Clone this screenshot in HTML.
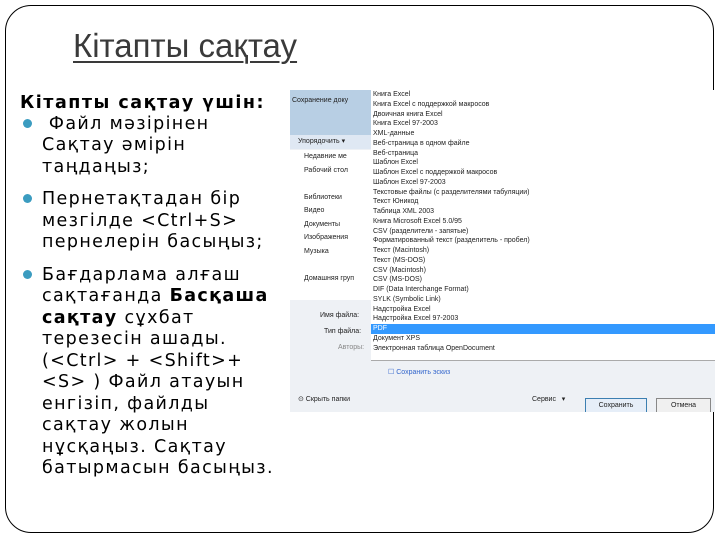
<!DOCTYPE html>
<html><head><meta charset="utf-8"><style>
body{margin:0;width:720px;height:540px;background:#fff;position:relative;overflow:hidden;font-family:"DejaVu Sans",sans-serif}
.frame{position:absolute;left:5px;top:5px;width:707px;height:526px;border:1.5px solid #000;border-radius:26px}
.title{position:absolute;left:73px;top:27px;font:33px "Liberation Sans",sans-serif;color:#3a3a3a;text-decoration:underline;text-decoration-thickness:2px;text-underline-offset:4px}
.txt{position:absolute;left:20px;top:93px;width:270px;font-size:17.5px;line-height:21.5px;color:#000;letter-spacing:1.35px}
.txt p{margin:0 0 11px 0;padding-left:22px;position:relative;white-space:nowrap}
.txt p.h{padding-left:0;font-weight:bold;margin-bottom:-1px;letter-spacing:1.5px}
.txt p.b:before{content:"";position:absolute;left:3px;top:5px;width:9px;height:9px;border-radius:50%;background:#3b9cc0}
.shot{position:absolute;left:290px;top:90px;width:425px;height:322px;background:#eef1f5;overflow:hidden;font:7px "Liberation Sans",sans-serif;color:#222}
.nav{position:absolute;left:0;top:0;width:82px;height:210px;background:#fff}
.topbar{position:absolute;left:0;top:0;width:82px;height:48px;background:#b8cfe4}
.list{position:absolute;left:81px;top:0;width:344px;height:270px;background:#fff;border-right:1px solid #888;border-bottom:1px solid #aaa}
.list div{height:9.75px;line-height:9.75px;padding-left:2px;white-space:nowrap}
.list .sel{background:#3399ff;color:#fff}
.btn{position:absolute;top:308px;height:14px;border:1px solid #888;background:#e6eef8;text-align:center;line-height:14px}
</style></head><body>
<div class="frame"></div>
<div class="title">Кітапты сақтау</div>
<div class="txt">
<p class="h">Кітапты сақтау үшін:</p>
<p class="b">&nbsp;Файл мәзірінен<br>Сақтау әмірін<br>таңдаңыз;</p>
<p class="b">Пернетақтадан бір<br>мезгілде &lt;Ctrl+S&gt;<br>пернелерін басыңыз;</p>
<p class="b">Бағдарлама алғаш<br>сақтағанда <b>Басқаша</b><br><b>сақтау</b> сұхбат<br>терезесін ашады.<br>(&lt;Ctrl&gt; + &lt;Shift&gt;+<br>&lt;S&gt; ) Файл атауын<br>енгізіп, файлды<br>сақтау жолын<br>нұсқаңыз. Сақтау<br>батырмасын басыңыз.</p>
</div>
<div class="shot">
<div class="topbar"></div>
<div style="position:absolute;left:2px;top:7px;width:78px">Сохранение доку</div>
<div style="position:absolute;left:0;top:45px;width:82px;height:14px;background:#dfe8f3;padding-left:8px;line-height:14px">Упорядочить ▾</div>
<div class="nav" style="top:60px;height:150px;line-height:13.5px;padding-left:14px;width:68px">Недавние ме<br>Рабочий стол<br><br>Библиотеки<br>Видео<br>Документы<br>Изображения<br>Музыка<br><br>Домашняя груп</div>
<div style="position:absolute;left:30px;top:222px">Имя файла:</div>
<div style="position:absolute;left:34px;top:238px">Тип файла:</div>
<div style="position:absolute;left:48px;top:254px;color:#888">Авторы:</div>
<div style="position:absolute;left:8px;top:305px">⊙ Скрыть папки</div>
<div style="position:absolute;left:98px;top:278px;color:#36c">☐ Сохранить эскиз</div>
<div style="position:absolute;left:242px;top:305px">Сервис &nbsp; ▾</div>
<div class="btn" style="left:295px;width:60px;border-color:#3c7fb1">Сохранить</div>
<div class="btn" style="left:366px;width:53px;background:#f0f0f0">Отмена</div>
<div class="list">
<div>Книга Excel</div><div>Книга Excel с поддержкой макросов</div><div>Двоичная книга Excel</div><div>Книга Excel 97-2003</div><div>XML-данные</div><div>Веб-страница в одном файле</div><div>Веб-страница</div><div>Шаблон Excel</div><div>Шаблон Excel с поддержкой макросов</div><div>Шаблон Excel 97-2003</div><div>Текстовые файлы (с разделителями табуляции)</div><div>Текст Юникод</div><div>Таблица XML 2003</div><div>Книга Microsoft Excel 5.0/95</div><div>CSV (разделители - запятые)</div><div>Форматированный текст (разделитель - пробел)</div><div>Текст (Macintosh)</div><div>Текст (MS-DOS)</div><div>CSV (Macintosh)</div><div>CSV (MS-DOS)</div><div>DIF (Data Interchange Format)</div><div>SYLK (Symbolic Link)</div><div>Надстройка Excel</div><div>Надстройка Excel 97-2003</div><div class="sel">PDF</div><div>Документ XPS</div><div>Электронная таблица OpenDocument</div>
</div>
</div>
</body></html>
